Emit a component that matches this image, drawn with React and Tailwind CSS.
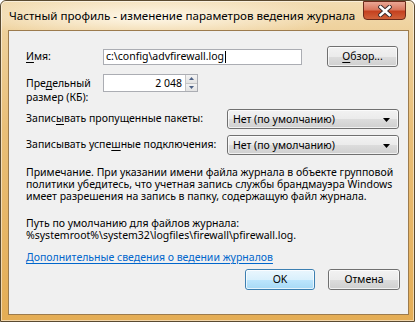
import React from "react";

const font = { fontFamily: '"Noto Sans", "Open Sans", sans-serif' };

function Btn({ children, def, className = "" }) {
  return (
    <div
      className={`relative flex items-center justify-center rounded-[3px] border ${
        def ? "border-[#3c7fb1]" : "border-[#707070]"
      } ${className}`}
      style={{
        background: def
          ? "linear-gradient(#eaf6fd 0%, #d9f0fc 50%, #bee6fd 50%, #a7d9f5 100%)"
          : "linear-gradient(#f2f2f2 0%, #ebebeb 50%, #dddddd 50%, #cfcfcf 100%)",
      }}
    >
      <div className="absolute inset-0 rounded-[2px] border border-white/70" />
      <span className="relative text-[10.5px] text-black leading-none">{children}</span>
    </div>
  );
}

function Combo({ className = "" }) {
  return (
    <div
      className={`relative flex items-center rounded-[3px] border border-[#707070] pl-[5px] ${className}`}
      style={{ background: "linear-gradient(#f2f2f2 0%, #ebebeb 50%, #dddddd 50%, #cfcfcf 100%)" }}
    >
      <div className="absolute inset-0 rounded-[2px] border border-white/70" />
      <span className="relative text-[10.5px] leading-none text-black">Нет (по умолчанию)</span>
      <svg className="absolute right-[8px] top-[8px]" width="7" height="4" viewBox="0 0 7 4">
        <path d="M0 0 H7 L3.5 4 Z" fill="#000" />
      </svg>
    </div>
  );
}

export default function App() {
  return (
    <div className="w-[415px] h-[322px] overflow-hidden bg-white" style={font}>
      <div
        className="relative w-[415px] h-[322px] rounded-t-[6px] border border-[#5a4a30]"
        style={{
          background:
            "radial-gradient(ellipse 190px 22px at 150px 16px, rgba(255,250,238,0.95), rgba(255,250,238,0) 100%), linear-gradient(#f2dcb2 0%, #eed09a 10%, #e9bf78 40%, #e4ad55 100%)",
        }}
      >
        <div className="absolute inset-0 rounded-t-[5px] border border-white/50" />
        {/* title */}
        <div className="relative h-[29px] flex items-center pl-[8px]">
          <span className="text-[11.6px] text-black leading-none whitespace-nowrap">
            Частный профиль - изменение параметров ведения журнала
          </span>
        </div>
        {/* close button */}
        <div
          className="absolute top-[0px] left-[362px] w-[43px] h-[19px] rounded-b-[4px] border border-[#6b2a1a] flex items-center justify-center"
          style={{
            background: "linear-gradient(#e9a795 0%, #d9775d 45%, #c5411f 55%, #d0623a 100%)",
          }}
        >
          <svg width="14" height="12" viewBox="0 0 14 12">
            <path d="M2.5 2 L11.5 10 M11.5 2 L2.5 10" stroke="#3a2a2a" strokeWidth="4.4" strokeLinecap="square" />
            <path d="M2.5 2 L11.5 10 M11.5 2 L2.5 10" stroke="#fff" strokeWidth="2.6" strokeLinecap="square" />
          </svg>
        </div>
        {/* client */}
        <div className="relative ml-[7px] w-[401px] h-[285px] border border-[#9c7b4d] bg-[#f0f0f0] text-[10.5px] text-black whitespace-nowrap">
          <div className="flex flex-col pl-[17px] pr-[8px]">
            {/* row 1 */}
            <div className="flex items-center mt-[15px] h-[21px]">
              <div className="w-[77px]">
                <span className="underline underline-offset-2">И</span>мя:
              </div>
              <div className="relative w-[199px] h-[16px] border border-[#abadb3] bg-white flex items-center pl-[2px]">
                <span className="leading-none">c:\config\advfirewall.log</span>
                <span className="inline-block w-px h-[12px] bg-black ml-px" />
              </div>
              <Btn className="ml-[25px] w-[71px] h-[21px]">
                <span className="underline underline-offset-2">О</span>бзор...
              </Btn>
            </div>
            {/* row 2 */}
            <div className="flex items-start mt-[7px] h-[30px]">
              <div className="w-[77px] leading-[14px] pt-[2px]">
                Пре<span className="underline underline-offset-2">д</span>ельный
                <br />
                размер (КБ):
              </div>
              <div className="w-[95px] h-[18px] border border-[#abadb3] bg-white flex">
                <div className="flex-1 flex items-center justify-end pr-[3px] leading-none">2 048</div>
                <div className="w-[12px] flex flex-col border-l border-[#c5c5c5]">
                  <div className="flex-1 flex items-center justify-center border-b border-[#c5c5c5]" style={{ background: "linear-gradient(#f3f3f3,#e3e3e3)" }}>
                    <svg width="5" height="3" viewBox="0 0 5 3"><path d="M0 3 H5 L2.5 0 Z" fill="#4d6185" /></svg>
                  </div>
                  <div className="flex-1 flex items-center justify-center" style={{ background: "linear-gradient(#f3f3f3,#e3e3e3)" }}>
                    <svg width="5" height="3" viewBox="0 0 5 3"><path d="M0 0 H5 L2.5 3 Z" fill="#4d6185" /></svg>
                  </div>
                </div>
              </div>
            </div>
            {/* row 3 */}
            <div className="flex items-center mt-[5px] h-[20px]">
              <div className="w-[201px]">
                Запис<span className="underline underline-offset-2">ы</span>вать пропущенные пакеты:
              </div>
              <Combo className="w-[172px] h-[20px]" />
            </div>
            {/* row 4 */}
            <div className="flex items-center mt-[6px] h-[20px]">
              <div className="w-[201px]">
                Записывать успе<span className="underline underline-offset-2">ш</span>ные подключения:
              </div>
              <Combo className="w-[172px] h-[20px]" />
            </div>
            {/* note */}
            <p className="mt-[11px] leading-[12px]">
              Примечание. При указании имени файла журнала в объекте групповой
              <br />
              политики убедитесь, что учетная запись службы брандмауэра Windows
              <br />
              имеет разрешения на запись в папку, содержащую файл журнала.
            </p>
            <p className="mt-[15px] leading-[12px]">
              Путь по умолчанию для файлов журнала:
              <br />
              %systemroot%\system32\logfiles\firewall\pfirewall.log.
            </p>
            <div className="mt-[10px] leading-[12px] self-start text-[#0066cc] underline underline-offset-2">
              Дополнительные сведения о ведении журналов
            </div>
            <div className="flex justify-end mt-[6px]">
              <Btn def className="w-[70px] h-[21px]">OK</Btn>
              <Btn className="ml-[13px] w-[72px] h-[21px]">Отмена</Btn>
            </div>
          </div>
        </div>
      </div>
    </div>
  );
}
